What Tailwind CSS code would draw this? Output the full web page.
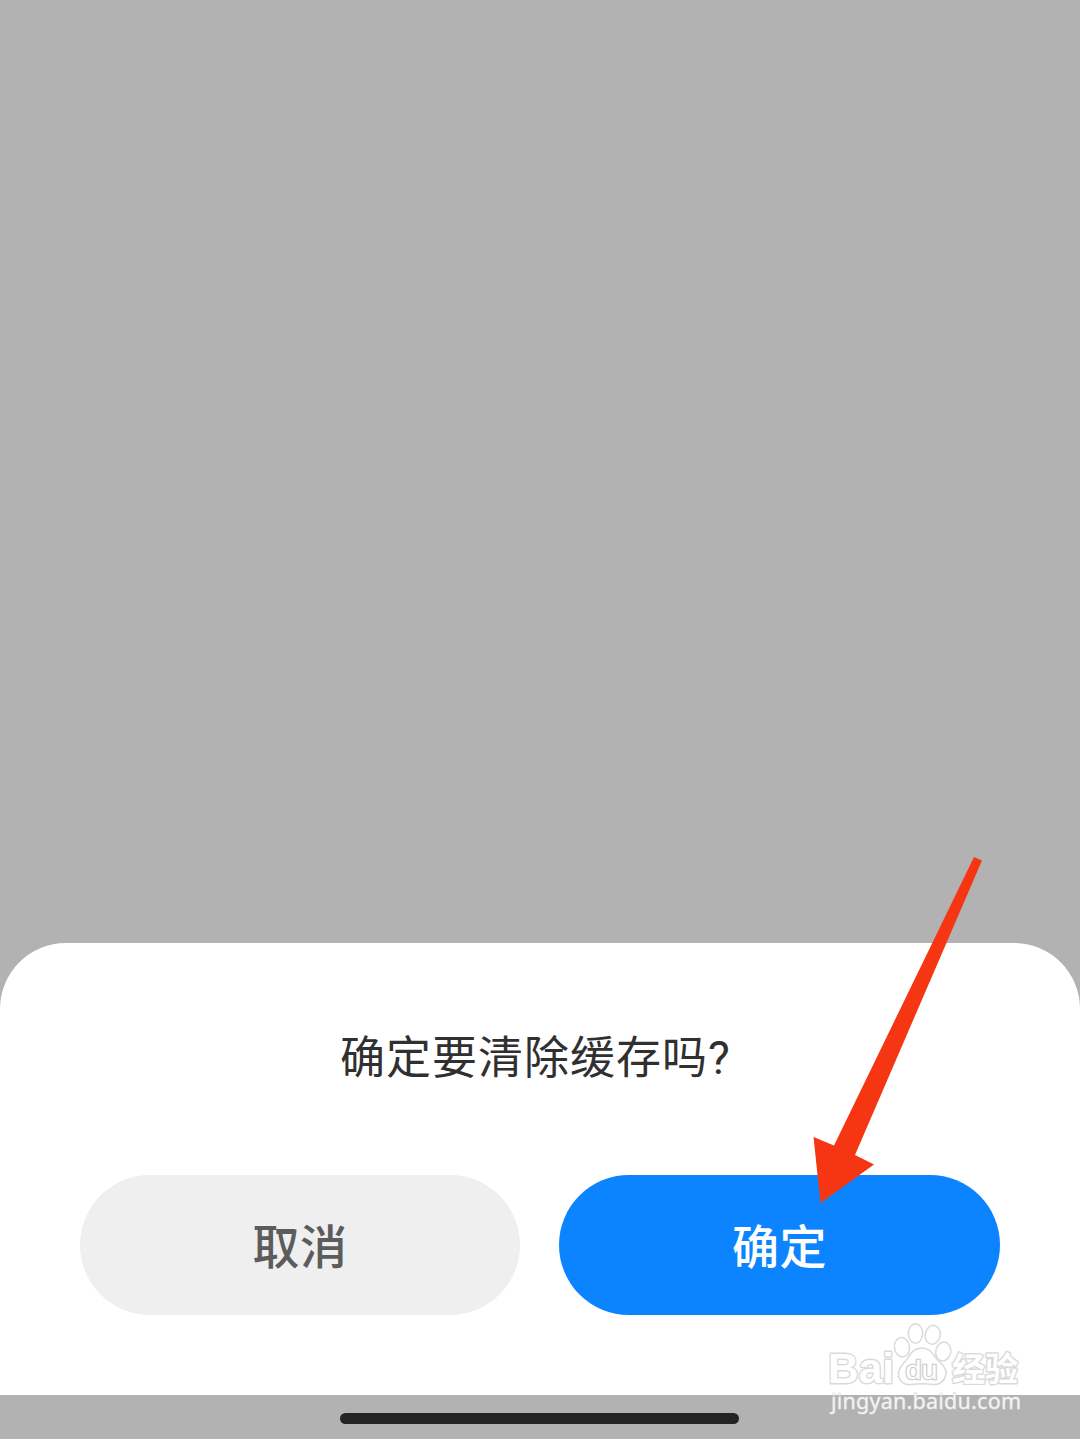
<!DOCTYPE html>
<html lang="zh-CN">
<head>
    <meta charset="UTF-8">
    <meta name="viewport" content="width=device-width, initial-scale=1.0">
    <title>清除缓存</title>
    <script src="https://cdn.jsdelivr.net/npm/@tailwindcss/browser@4"></script>
</head>
<body class="relative h-[1439px] w-[1080px] overflow-hidden bg-[#b2b2b2] flex flex-col justify-end font-['Noto_Sans_CJK_SC',sans-serif]">

    <!-- Bottom sheet -->
    <div class="h-[452px] bg-white rounded-t-[66px] px-20 pt-[79px] flex flex-col">
        <h1 class="h-[66px] leading-[66px] text-[45px] tracking-[1px] text-[#303030] pl-[260px] whitespace-nowrap">确定要清除缓存吗<span class="font-['Roboto',sans-serif] text-[46px]">?</span></h1>
        <div class="mt-[87px] flex gap-[39px]">
            <button class="w-[440px] h-[140px] pb-0.5 rounded-full bg-[#efefef] text-[#5c5c5c] text-[47px] tracking-[0.5px] font-medium">取消</button>
            <button class="w-[441px] h-[140px] pb-0.5 rounded-full bg-[#0d84ff] text-white text-[47px] tracking-[0.5px] font-medium">确定</button>
        </div>
    </div>

    <!-- Home indicator -->
    <div class="h-11 flex justify-center pt-[18px]">
        <div class="w-[399px] h-[10.5px] rounded-full bg-[#242424] -ml-px"></div>
    </div>

    <!-- Arrow and watermark -->
    <svg class="absolute inset-0 pointer-events-none" width="1080" height="1439" viewBox="0 0 1080 1439">
        <path d="M974 857L982 860.500L855 1155L874 1164.500L820.500 1203L813.500 1137L834 1145.500Z" fill="#f63612"/>
        <g fill="#fff" stroke="#dadada" stroke-width="1.500">
            <ellipse cx="915.500" cy="1333.500" rx="7.200" ry="9.800"/>
            <ellipse cx="932.700" cy="1334.800" rx="7.500" ry="9.500" transform="rotate(12 932.700 1334.800)"/>
            <ellipse cx="902" cy="1347.300" rx="7.500" ry="9.800" transform="rotate(-8 902 1347.300)"/>
            <ellipse cx="943.300" cy="1351.500" rx="7.500" ry="9.500" transform="rotate(12 943.300 1351.500)"/>
            <path d="M922 1348C929 1348 933 1353 936 1358C940 1363 947 1367 946 1374C945 1381 940 1385 933 1384.500C926 1383.500 918 1383.500 911 1384.500C903 1385.500 898 1380 898.500 1373C899 1366 906 1362 909 1356C912 1351 916 1348 922 1348Z"/>
        </g>
        <g fill="#fff" stroke="#dadada" stroke-width="2.800" paint-order="stroke" stroke-linejoin="round">
            <text x="828" y="1383" font-family="Liberation Sans" font-weight="700" font-size="43" textLength="66" lengthAdjust="spacingAndGlyphs">Bai</text>
            <text x="952" y="1381" font-family="Noto Sans CJK SC" font-weight="700" font-size="33" textLength="66" lengthAdjust="spacingAndGlyphs">经验</text>
        </g>
        <text x="905.500" y="1379" font-family="Liberation Sans" font-size="26" textLength="32" lengthAdjust="spacingAndGlyphs" fill="#fff" stroke="#d0d0d0" stroke-width="2.400" paint-order="stroke">du</text>
        <text x="831" y="1409" font-family="Noto Sans" font-size="21.500" textLength="190" lengthAdjust="spacing" fill="#f3f3f3" stroke="#d0d0d0" stroke-width="0.800" paint-order="stroke">jingyan.baidu.com</text>
    </svg>

</body>
</html>
